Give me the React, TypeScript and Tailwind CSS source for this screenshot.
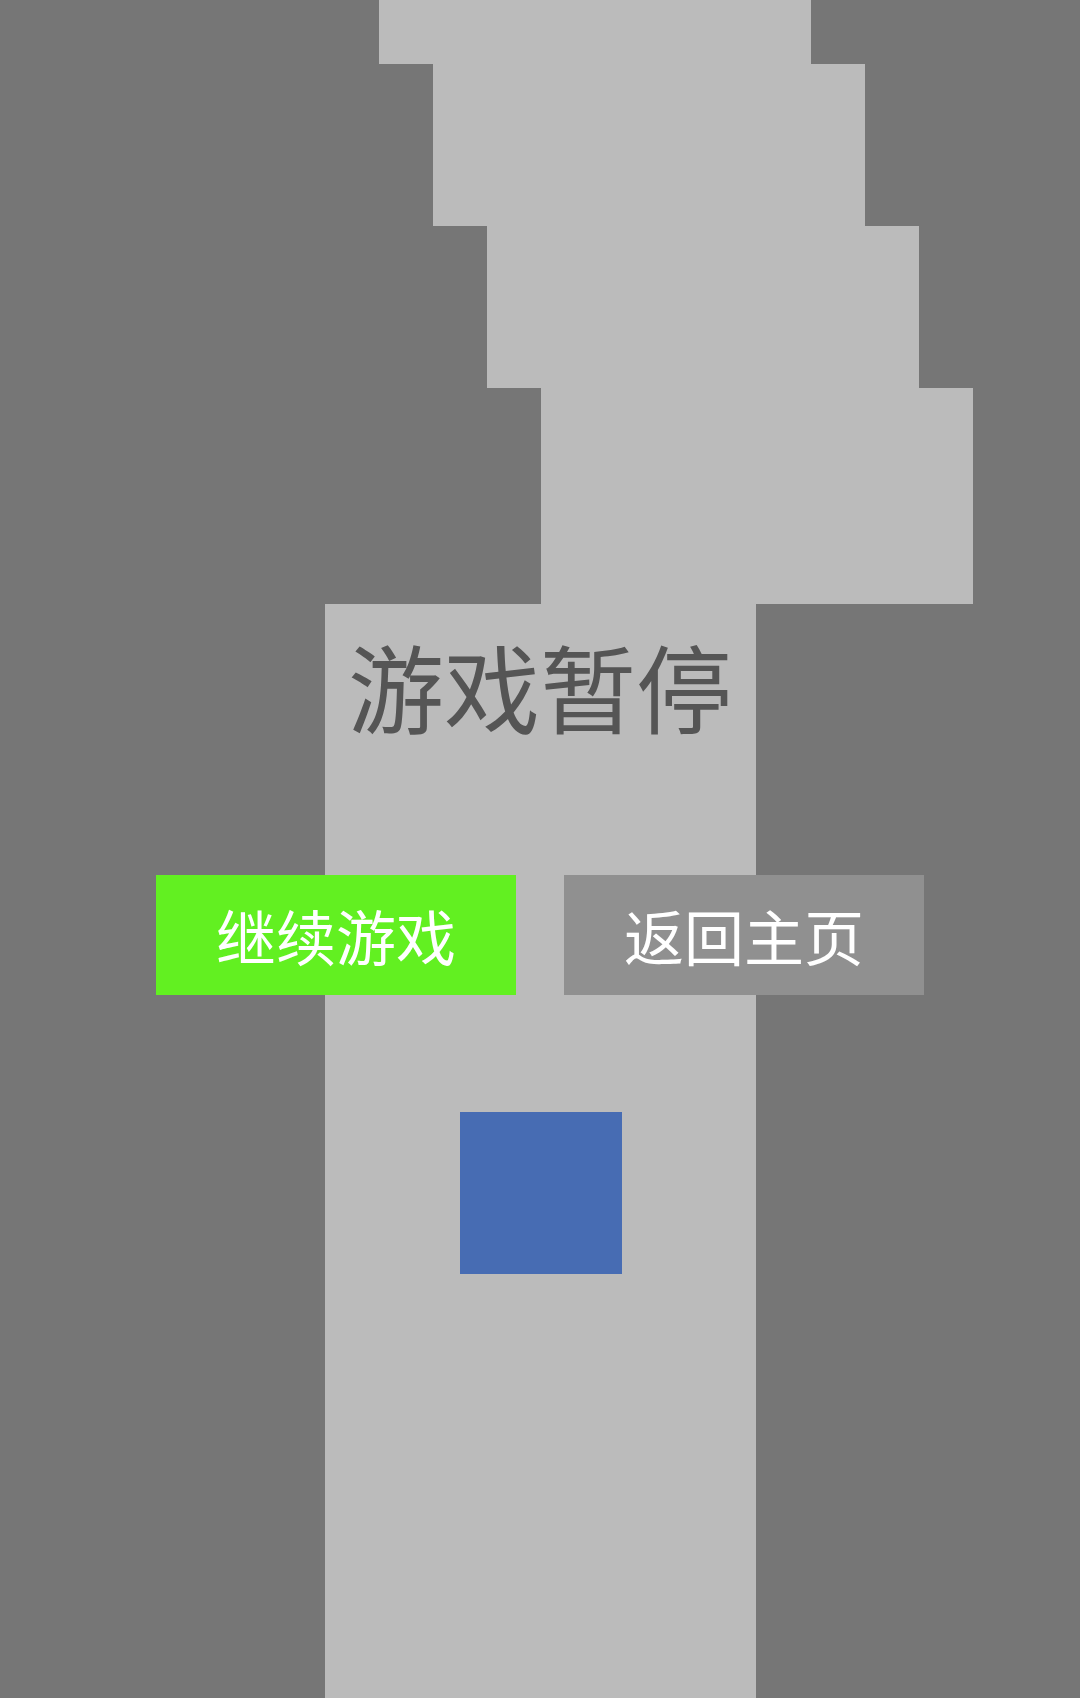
import React from 'react';

const ROAD = 'bg-[#bbbbbb]';

function Road() {
  return (
    <div className="flex flex-col">
      <div className={`h-[64px] w-[432px] ml-[379px] ${ROAD}`} />
      <div className={`h-[162px] w-[432px] ml-[433px] ${ROAD}`} />
      <div className={`h-[162px] w-[432px] ml-[487px] ${ROAD}`} />
      <div className={`h-[216px] w-[432px] ml-[541px] ${ROAD}`} />
      <div className={`h-[1094px] w-[431px] ml-[325px] ${ROAD} pt-[508px] pl-[135px]`}>
        {/* player */}
        <div className="w-[162px] h-[162px] bg-[#476cb3]" />
      </div>
    </div>
  );
}

function PauseMenu() {
  return (
    <div className="absolute inset-0 flex flex-col items-center pt-[637px] font-['Noto_Sans_CJK_SC',sans-serif]">
      <h1 className="text-[96px] leading-none h-[96px] text-[#555555] font-normal">游戏暂停</h1>
      <div className="flex gap-[48px] mt-[142px]">
        <button className="w-[360px] h-[120px] bg-[#62f021] text-white text-[60px] leading-none flex items-center justify-center">
          继续游戏
        </button>
        <button className="w-[360px] h-[120px] bg-[#909090] text-white text-[60px] leading-none flex items-center justify-center">
          返回主页
        </button>
      </div>
    </div>
  );
}

export default function App() {
  return (
    <div className="relative w-[1080px] h-[1698px] overflow-hidden bg-[#767676]">
      <Road />
      <PauseMenu />
    </div>
  );
}
